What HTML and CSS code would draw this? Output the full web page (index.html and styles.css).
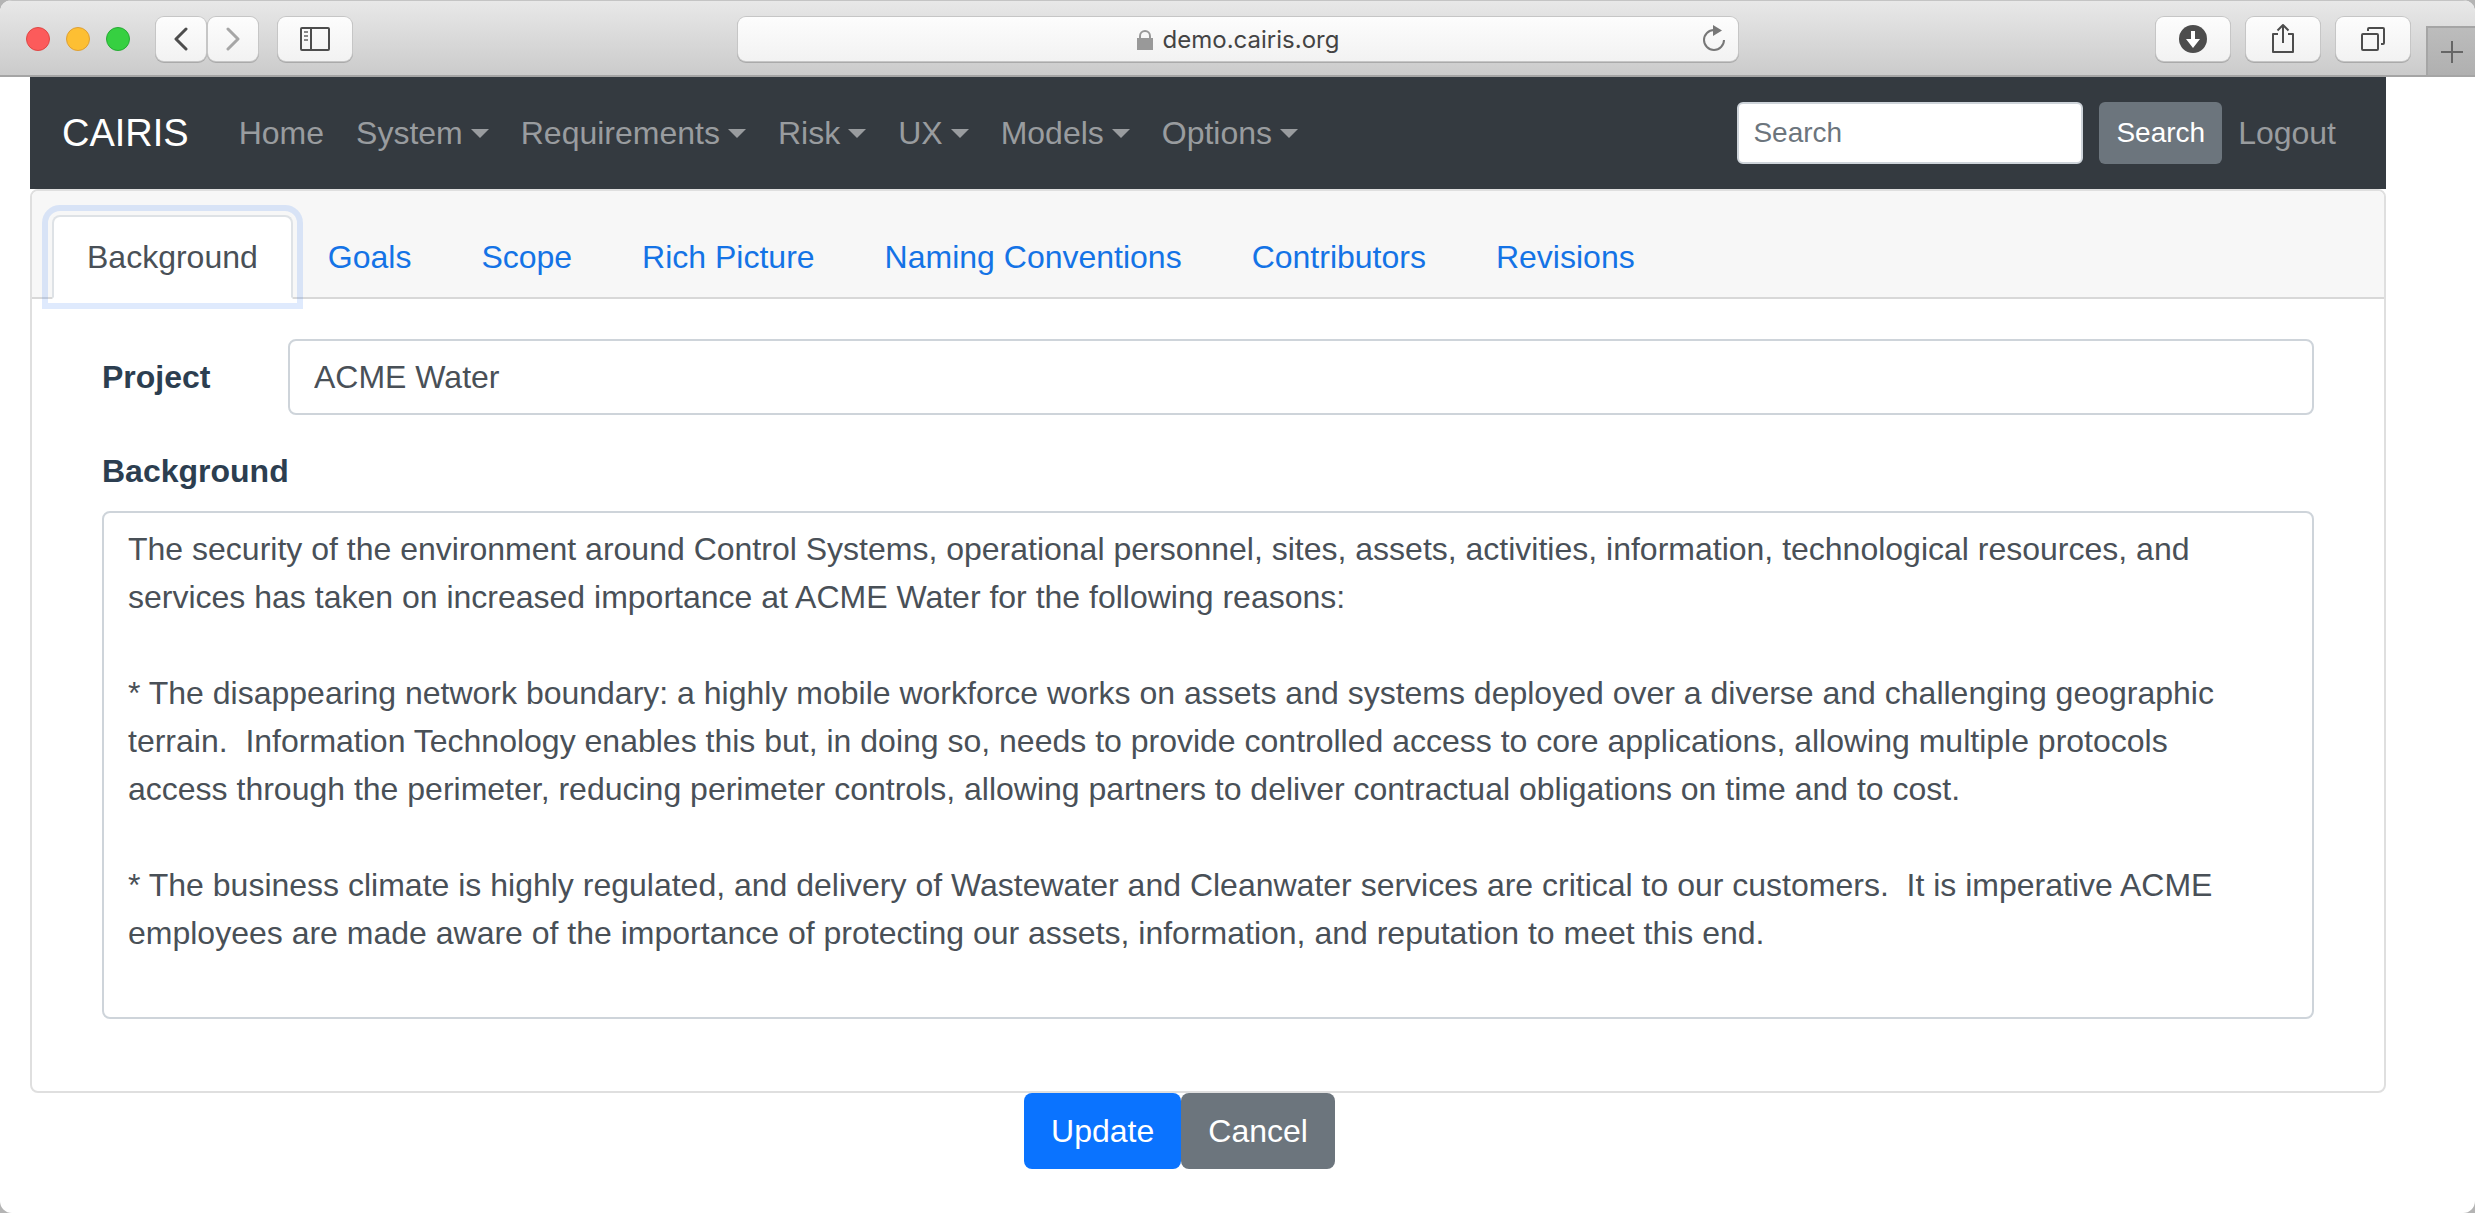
FILE: index.html
```html
<!DOCTYPE html>
<html lang="en">
<head>
<meta charset="utf-8">
<title>CAIRIS</title>
<link rel="stylesheet" href="styles.css">
</head>
<body>
<div class="window">
  <header class="toolbar">
    <div class="lights">
      <span class="light light-red"></span>
      <span class="light light-yellow"></span>
      <span class="light light-green"></span>
    </div>
    <div class="history">
      <button class="tool tool-narrow" type="button" aria-label="Back"><svg width="16" height="24" viewBox="0 0 16 24"><path d="M13 2 3 12l10 10" fill="none" stroke="#4d4d4d" stroke-width="3" stroke-linecap="round" stroke-linejoin="round"/></svg></button>
      <button class="tool tool-narrow" type="button" aria-label="Forward"><svg width="16" height="24" viewBox="0 0 16 24"><path d="M3 2l10 10L3 22" fill="none" stroke="#a6a6a6" stroke-width="3" stroke-linecap="round" stroke-linejoin="round"/></svg></button>
    </div>
    <button class="tool" type="button" aria-label="Sidebar"><svg width="30" height="24" viewBox="0 0 30 24"><g fill="none" stroke="#4d4d4d" stroke-width="2"><rect x="1" y="1" width="28" height="22" rx="1"/><path d="M11 1v22"/><path d="M4 5h4M4 9h4M4 13h4" stroke="#888"/></g></svg></button>
    <div class="address">
      <span class="host"><svg width="16" height="20" viewBox="0 0 16 20"><path d="M3 9V6a5 5 0 0 1 10 0v3" fill="none" stroke="#999" stroke-width="2"/><rect y="8" width="16" height="12" fill="#999"/></svg>demo.cairis.org</span>
      <button class="reload" type="button" aria-label="Reload"><svg width="24" height="28" viewBox="0 0 24 28"><path d="M12 5a10 10 0 1 0 10 10" fill="none" stroke="#777" stroke-width="2"/><path d="M11 0l9 5.500-9 5.500z" fill="#777"/></svg></button>
    </div>
    <div class="tools">
      <button class="tool" type="button" aria-label="Downloads"><svg width="28" height="28" viewBox="0 0 28 28"><circle cx="14" cy="14" r="14" fill="#4d4d4d"/><path d="M12 6h4v8h5l-7 9-7-9h5z" fill="#fff"/></svg></button>
      <button class="tool" type="button" aria-label="Share"><svg width="22" height="32" viewBox="0 0 22 32"><path d="M6 11H1v18h20V11h-5M11 20V2M5.500 7.500 11 2l5.500 5.500" fill="none" stroke="#4d4d4d" stroke-width="2" stroke-linejoin="round"/></svg></button>
      <button class="tool" type="button" aria-label="Tabs"><svg width="24" height="24" viewBox="0 0 24 24"><g fill="none" stroke="#4d4d4d" stroke-width="2"><rect x="1" y="7" width="16" height="16" rx="1"/><path d="M7 4V2q0-1 1-1h14q1 0 1 1v14q0 1-1 1h-2"/></g></svg></button>
    </div>
    <button class="new-tab" type="button" aria-label="New tab"><svg width="22" height="22" viewBox="0 0 22 22"><path d="M11 0v22M0 11h22" stroke="#666" stroke-width="2"/></svg></button>
  </header>

  <div class="page">
    <nav class="navbar">
      <a class="brand" href="#">CAIRIS</a>
      <div class="nav-links">
        <a class="nav-link" href="#">Home</a>
        <a class="nav-link dropdown" href="#">System</a>
        <a class="nav-link dropdown" href="#">Requirements</a>
        <a class="nav-link dropdown" href="#">Risk</a>
        <a class="nav-link dropdown" href="#">UX</a>
        <a class="nav-link dropdown" href="#">Models</a>
        <a class="nav-link dropdown" href="#">Options</a>
      </div>
      <form class="search">
        <input class="search-box" type="text" placeholder="Search" aria-label="Search">
        <button class="search-button" type="button">Search</button>
      </form>
      <a class="nav-link" href="#">Logout</a>
    </nav>

    <main class="card">
      <div class="tabs">
        <a class="tab tab-active" href="#">Background</a>
        <a class="tab" href="#">Goals</a>
        <a class="tab" href="#">Scope</a>
        <a class="tab" href="#">Rich Picture</a>
        <a class="tab" href="#">Naming Conventions</a>
        <a class="tab" href="#">Contributors</a>
        <a class="tab" href="#">Revisions</a>
      </div>
      <div class="card-body">
        <div class="row">
          <label class="label" for="project">Project</label>
          <input class="field" id="project" type="text" value="ACME Water">
        </div>
        <div class="group">
          <label class="label" for="background">Background</label>
          <textarea class="field area" id="background" rows="10">The security of the environment around Control Systems, operational personnel, sites, assets, activities, information, technological resources, and services has taken on increased importance at ACME Water for the following reasons:

* The disappearing network boundary: a highly mobile workforce works on assets and systems deployed over a diverse and challenging geographic terrain.  Information Technology enables this but, in doing so, needs to provide controlled access to core applications, allowing multiple protocols access through the perimeter, reducing perimeter controls, allowing partners to deliver contractual obligations on time and to cost.

* The business climate is highly regulated, and delivery of Wastewater and Cleanwater services are critical to our customers.  It is imperative ACME employees are made aware of the importance of protecting our assets, information, and reputation to meet this end.</textarea>
        </div>
      </div>
    </main>
    <div class="actions">
      <button class="button button-primary" type="button">Update</button>
      <button class="button button-secondary" type="button">Cancel</button>
    </div>
  </div>
</div>
</body>
</html>
```
FILE: styles.css
```css
* { box-sizing: border-box; }

body {
  margin: 0;
  background: #b4b4b4;
  color: #2c3e50;
  font: 32px/48px "Liberation Sans", Arial, sans-serif;
}

a { text-decoration: none; }
button, input, textarea { font: inherit; margin: 0; }
svg { display: block; flex: none; }

.window {
  min-height: 100vh;
  background: #fff;
  border-radius: 12px;
  overflow: hidden;
}

/* Browser toolbar */
.toolbar {
  display: flex;
  align-items: center;
  height: 77px;
  padding: 2px 0 0 26px;
  background: linear-gradient(#e8e8e8, #cbcbcb);
  border-top: 1px solid #c4c4c4;
  border-bottom: 2px solid #a5a5a5;
}

.lights { display: flex; gap: 16px; margin-right: 26px; }
.light { width: 24px; height: 24px; border-radius: 50%; border: 1px solid; }
.light-red { background: #fc5b5b; border-color: #df4744; }
.light-yellow { background: #fdbf33; border-color: #de9f34; }
.light-green { background: #36d041; border-color: #27aa35; }

.history { display: flex; gap: 2px; margin-right: 20px; }

.tool {
  display: flex;
  align-items: center;
  justify-content: center;
  width: 74px;
  height: 44px;
  padding: 0;
  border: 0;
  border-radius: 8px;
  background: linear-gradient(#fdfdfd, #f2f2f2);
  box-shadow: 0 0 0 1px #c6c6c6, 0 1px 0 1px #aaa;
}
.tool-narrow { width: 50px; }

.address {
  display: flex;
  align-items: center;
  flex: 1;
  height: 44px;
  margin: 0 418px 0 386px;
  padding: 0 12px 0 36px;
  border-radius: 8px;
  background: linear-gradient(#fdfdfd, #f2f2f2);
  box-shadow: 0 0 0 1px #c6c6c6, 0 1px 0 1px #aaa;
}

.host {
  display: flex;
  flex: 1;
  align-items: center;
  justify-content: center;
  gap: 10px;
  padding-top: 2px;
  color: #444;
  font: 24px/32px Inter, sans-serif;
}

.reload { padding: 0; border: 0; background: none; }
.tools { display: flex; gap: 16px; margin-right: 16px; }

.new-tab {
  display: flex;
  align-items: center;
  justify-content: center;
  align-self: flex-end;
  width: 49px;
  height: 49px;
  padding: 0;
  border: 0;
  border-left: 2px solid #a5a5a5;
  border-top: 2px solid #a5a5a5;
  background: linear-gradient(#bcbcbc, #b0b0b0);
}

/* Application */
.page { padding: 0 89px 40px 30px; }

.navbar {
  display: flex;
  align-items: center;
  padding: 16px 32px;
  background: #343a40;
}

.brand { margin-right: 34px; color: #fff; font-size: 38px; line-height: 60px; }
.nav-links { display: flex; flex: 1; }

.nav-link {
  display: flex;
  align-items: center;
  padding: 16px;
  color: #999c9f;
}
.navbar > .nav-link { padding-right: 18px; }

.dropdown::after {
  content: "";
  margin-left: 8px;
  border: 9px solid transparent;
  border-top-color: currentColor;
  border-bottom: 0;
}

.search { display: flex; gap: 16px; font-size: 28px; line-height: 42px; }

.search-box {
  width: 346px;
  height: 62px;
  padding: 8px 14px;
  border: 2px solid #ced4da;
  border-radius: 6px;
  background: #fff;
}
.search-box::placeholder { color: #6c757d; }

.search-button {
  height: 62px;
  padding: 8px 17px;
  border: 0;
  border-radius: 6px;
  background: #6c757d;
  color: #fff;
}

.card {
  border: 2px solid #dfdfdf;
  border-radius: 8px;
  background: #fff;
}

.tabs {
  display: flex;
  padding: 24px 20px 0;
  background: #f7f7f7;
  border-bottom: 2px solid #d8d8d8;
  border-radius: 6px 6px 0 0;
}

.tab {
  margin-bottom: -2px;
  padding: 16px 33px;
  border: 2px solid transparent;
  border-radius: 8px 8px 0 0;
  color: #1473e6;
}

.tab-active {
  background: #fff;
  border-color: #dee2e6 #dee2e6 #fff;
  color: #495057;
  outline: 6px solid rgba(66, 133, 244, 0.17);
  outline-offset: 4px;
}

.card-body {
  display: flex;
  flex-direction: column;
  gap: 32px;
  padding: 40px 70px 72px;
}

.row { display: grid; grid-template-columns: 186px 1fr; align-items: center; }
.group { display: flex; flex-direction: column; gap: 16px; }
.label { font-weight: bold; }

.field {
  display: block;
  width: 100%;
  height: 76px;
  padding: 12px 24px;
  border: 2px solid #ced4da;
  border-radius: 8px;
  background: #fff;
  color: #495057;
}
.area { height: auto; padding-right: 48px; resize: none; overflow: hidden; }

.actions { display: flex; justify-content: center; padding-right: 57px; }

.button {
  padding: 14px 27px;
  border: 0;
  border-radius: 8px;
  color: #fff;
}
.button-primary { background: #0a73ff; }
.button-secondary { background: #6c757d; }
```
